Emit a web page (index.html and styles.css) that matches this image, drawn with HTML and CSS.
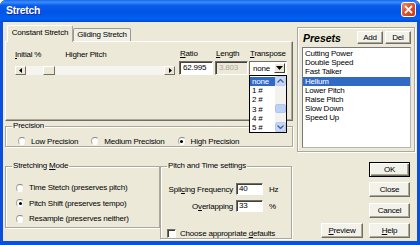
FILE: index.html
```html
<!DOCTYPE html>
<html lang="en">
<head>
    <meta charset="UTF-8">
    <title>Stretch</title>
    <link rel="stylesheet" href="styles.css">
</head>
<body>
    <div class="window">
        <div class="titlebar">
            <span class="title">Stretch</span>
            <span class="close">
                <svg width="9" height="9" viewBox="0 0 9 9"><path d="M1 1 L8 8 M8 1 L1 8" stroke="#fff" stroke-width="1.8"/></svg>
            </span>
        </div>
        <div class="client">
            <div class="top-row">
                <div class="left-col">
                    <div class="tabs">
                        <div class="tab active">Constant Stretch</div>
                        <div class="tab">Gliding Stretch</div>
                    </div>
                    <div class="panel">
                        <div class="slider-block">
                            <div class="slider-labels">
                                <span><u>I</u>nitial %</span>
                                <span class="higher">Higher Pitch</span>
                            </div>
                            <div class="scrollbar">
                                <span class="sb-btn"><svg width="4" height="5" viewBox="0 0 4 5"><path d="M3 0 L0 2.5 L3 5 Z" fill="#000"/></svg></span>
                                <span class="sb-track"><span class="sb-thumb"></span></span>
                                <span class="sb-btn"><svg width="4" height="5" viewBox="0 0 4 5"><path d="M1 0 L4 2.5 L1 5 Z" fill="#000"/></svg></span>
                            </div>
                        </div>
                        <div class="field ratio">
                            <label><u>R</u>atio</label>
                            <div class="input">62.995</div>
                        </div>
                        <div class="field length">
                            <label><u>L</u>ength</label>
                            <div class="input disabled">3.803</div>
                        </div>
                        <div class="field transpose">
                            <label><u>T</u>ranspose</label>
                            <div class="combo">
                                <span class="combo-value">none</span>
                                <span class="combo-btn"><svg width="7" height="4" viewBox="0 0 7 4"><path d="M0 0 H7 L3.5 4 Z" fill="#000"/></svg></span>
                            </div>
                            <div class="droplist">
                                <ul class="drop-items">
                                    <li class="selected">none</li>
                                    <li>1 #</li>
                                    <li>2 #</li>
                                    <li>3 #</li>
                                    <li>4 #</li>
                                    <li>5 #</li>
                                </ul>
                                <div class="drop-scroll">
                                    <span class="xp-arrow"><svg width="7" height="4" viewBox="0 0 7 4"><path d="M0.5 3.5 L3.5 0.5 L6.5 3.5" stroke="#4d6185" stroke-width="1.3" fill="none"/></svg></span>
                                    <span class="xp-track"><span class="xp-thumb"></span></span>
                                    <span class="xp-arrow"><svg width="7" height="4" viewBox="0 0 7 4"><path d="M0.5 0.5 L3.5 3.5 L6.5 0.5" stroke="#4d6185" stroke-width="1.3" fill="none"/></svg></span>
                                </div>
                            </div>
                        </div>
                    </div>
                    <fieldset class="group precision">
                        <legend>Precision</legend>
                        <div class="radio-row">
                            <span class="option"><span class="radio"></span>Low Precision</span>
                            <span class="option"><span class="radio"></span>Medium Precision</span>
                            <span class="option"><span class="radio checked"></span>High Precision</span>
                        </div>
                    </fieldset>
                </div>
                <div class="presets">
                    <div class="presets-head">
                        <span class="presets-title">Presets</span>
                        <button class="btn small">Add</button>
                        <button class="btn small">Del</button>
                    </div>
                    <ul class="preset-list">
                        <li>Cutting Power</li>
                        <li>Double Speed</li>
                        <li>Fast Talker</li>
                        <li class="selected">Helium</li>
                        <li>Lower Pitch</li>
                        <li>Raise Pitch</li>
                        <li>Slow Down</li>
                        <li>Speed Up</li>
                    </ul>
                </div>
            </div>
            <div class="bottom-row">
                <fieldset class="group mode">
                    <legend>Stretching <u>M</u>ode</legend>
                    <div class="option-col">
                        <span class="option"><span class="radio"></span>Time Stetch (preserves pitch)</span>
                        <span class="option"><span class="radio checked"></span>Pitch Shift (preserves tempo)</span>
                        <span class="option"><span class="radio"></span>Resample (preserves neither)</span>
                    </div>
                </fieldset>
                <fieldset class="group pitch">
                    <legend>Pitch and Time settings</legend>
                    <div class="settings">
                        <span class="set-label">Spli<u>c</u>ing Frequency</span>
                        <div class="input">40</div>
                        <span>Hz</span>
                        <span class="set-label">O<u>v</u>erlapping</span>
                        <div class="input">33</div>
                        <span>%</span>
                    </div>
                    <div class="check-row"><span class="checkbox"></span><span>Choose appropriate <u>d</u>efaults</span></div>
                </fieldset>
                <div class="buttons">
                    <span></span>
                    <button class="btn default">OK</button>
                    <span></span>
                    <button class="btn">Close</button>
                    <span></span>
                    <button class="btn">Cancel</button>
                    <button class="btn"><u>P</u>review</button>
                    <button class="btn"><u>H</u>elp</button>
                </div>
            </div>
        </div>
    </div>
</body>
</html>
```

FILE: styles.css
```css
body {
    margin: 0;
    background: #ffffff;
    font-family: "Liberation Sans", Arial, sans-serif;
    font-size: 8px;
    letter-spacing: -0.2px;
    color: #000;
}
.window {
    width: 420px;
    height: 245px;
    display: flex;
    flex-direction: column;
    background: #0b50dc;
    border-radius: 6px 6px 0 0;
    overflow: hidden;
}
.titlebar {
    height: 22px;
    flex: none;
    display: flex;
    align-items: center;
    justify-content: space-between;
    padding: 0 4px 0 6px;
    background: linear-gradient(180deg, #1668f0 0%, #3d8dfb 10%, #0a5cec 25%, #0054e6 55%, #0060f2 85%, #0049d4 100%);
}
.title {
    color: #fff;
    font-weight: bold;
    font-size: 10.5px;
    letter-spacing: -0.3px;
    text-shadow: 1px 1px 0 #0b2a9a;
    margin-top: -3px;
}
.close {
    width: 15px;
    height: 15px;
    box-sizing: border-box;
    border: 1px solid #fff;
    border-radius: 3px;
    background: linear-gradient(135deg, #f08b6c 0%, #e0532f 45%, #c63b1d 100%);
    display: flex;
    align-items: center;
    justify-content: center;
    margin-top: -3px;
}
.client {
    flex: 1;
    margin: 0 3px 4px;
    background: #ece9d8;
    padding: 3px 2px 0;
    display: flex;
    flex-direction: column;
}
.top-row {
    display: flex;
    gap: 4px;
    height: 127px;
}
.left-col {
    width: 288px;
    display: flex;
    flex-direction: column;
}
.tabs {
    display: flex;
    height: 16px;
    padding-left: 2px;
    position: relative;
    z-index: 1;
}
.tab {
    box-sizing: border-box;
    border: 1px solid #919b9c;
    border-bottom: none;
    border-radius: 2px 2px 0 0;
    background: #f1efe4;
    text-align: center;
    line-height: 12px;
}
.tab.active {
    width: 66px;
    height: 17px;
    line-height: 14px;
    background: #ece9d8;
    border-color: #aca899;
    border-top: 1px solid #fff;
    border-left: 1px solid #fff;
}
.tab:not(.active) {
    width: 58px;
    height: 13px;
    margin-top: 3px;
}
.panel {
    height: 80px;
    box-sizing: border-box;
    border-top: 1px solid #fff;
    border-left: 1px solid #fff;
    border-right: 1px solid #716f64;
    border-bottom: 1px solid #716f64;
    box-shadow: inset -1px -1px 0 #aca899;
    padding: 6px 0 0 9px;
    display: flex;
    align-items: flex-start;
}
.slider-block {
    width: 160px;
}
.slider-labels {
    height: 12px;
    line-height: 14px;
}
.higher {
    margin-left: 22px;
}
.scrollbar {
    margin-top: 6px;
    height: 9px;
    display: flex;
}
.sb-btn {
    width: 11px;
    height: 9px;
    box-sizing: border-box;
    background: #ece9d8;
    border-top: 1px solid #fff;
    border-left: 1px solid #fff;
    border-right: 1px solid #716f64;
    border-bottom: 1px solid #716f64;
    display: flex;
    align-items: center;
    justify-content: center;
}
.sb-track {
    flex: 1;
    background: #f5f4ee;
    display: flex;
    padding-left: 17px;
}
.sb-thumb {
    width: 12px;
    height: 9px;
    box-sizing: border-box;
    background: #ece9d8;
    border-top: 1px solid #fff;
    border-left: 1px solid #fff;
    border-right: 1px solid #716f64;
    border-bottom: 1px solid #716f64;
}
.field {
    display: flex;
    flex-direction: column;
}
.field label {
    height: 12px;
    line-height: 11px;
    padding-left: 1px;
}
.ratio { width: 34px; margin-left: 4px; }
.length { width: 33px; margin-left: 2px; }
.transpose { width: 38px; margin-left: 1px; position: relative; }
.input {
    margin-top: 1px;
    height: 14px;
    box-sizing: border-box;
    background: #fff;
    border-top: 1px solid #716f64;
    border-left: 1px solid #716f64;
    border-right: 1px solid #fff;
    border-bottom: 1px solid #fff;
    box-shadow: inset 1px 1px 0 #404040;
    padding-left: 3px;
    line-height: 12px;
}
.input.disabled {
    background: #ece9d8;
    color: #aca899;
}
.combo {
    margin-top: 1px;
    height: 14px;
    box-sizing: border-box;
    background: #fff;
    border-top: 1px solid #716f64;
    border-left: 1px solid #716f64;
    border-right: 1px solid #fff;
    border-bottom: 1px solid #fff;
    display: flex;
    align-items: center;
    justify-content: space-between;
    padding: 1px 1px 1px 3px;
}
.combo-btn {
    width: 11px;
    height: 10px;
    box-sizing: border-box;
    background: #ece9d8;
    border-top: 1px solid #fff;
    border-left: 1px solid #fff;
    border-right: 1px solid #404040;
    border-bottom: 1px solid #404040;
    display: flex;
    align-items: center;
    justify-content: center;
}
.droplist {
    position: absolute;
    top: 27px;
    left: 0;
    width: 38px;
    height: 58px;
    box-sizing: border-box;
    border: 1px solid #000;
    background: #fff;
    display: flex;
    z-index: 5;
}
.drop-items {
    flex: 1;
    list-style: none;
    margin: 0;
    padding: 1px 0 0;
}
.drop-items li {
    height: 9.2px;
    line-height: 9.2px;
    padding-left: 2px;
}
.drop-items li.selected,
.preset-list li.selected {
    background: #316ac5;
    color: #fff;
}
.drop-scroll {
    width: 11px;
    display: flex;
    flex-direction: column;
    background: #f3f2ec;
}
.xp-arrow {
    height: 10px;
    box-sizing: border-box;
    border: 1px solid #b7cbf4;
    border-radius: 2px;
    background: #c6d6fa;
    display: flex;
    align-items: center;
    justify-content: center;
}
.xp-track {
    flex: 1;
    padding-top: 18px;
}
.xp-thumb {
    display: block;
    height: 7px;
    border-radius: 2px;
    background: #bcd0f8;
    border: 1px solid #b0c6f2;
}
fieldset.group {
    margin: 0;
    padding: 0;
    min-width: 0;
    box-sizing: border-box;
    border: 1px solid #aca899;
    box-shadow: inset 1px 1px 0 #fff, 1px 1px 0 #fff;
}
fieldset.group legend {
    padding: 0 1px;
    margin-left: 6px;
    line-height: 10px;
}
.precision {
    margin-top: 4px;
    padding-bottom: 4px;
}
.radio-row {
    display: flex;
    gap: 13px;
    height: 10px;
    align-items: center;
    margin: 5px 0 0 12px;
}
.option {
    display: flex;
    align-items: center;
    gap: 5px;
}
.radio {
    width: 8px;
    height: 8px;
    box-sizing: border-box;
    border-radius: 50%;
    background: #fff;
    border: 1px solid;
    border-color: #8a8778 #e6e4da #fff #a9a79a;
    display: flex;
    align-items: center;
    justify-content: center;
}
.radio.checked::after {
    content: "";
    width: 3px;
    height: 3px;
    border-radius: 50%;
    background: #000;
}
.presets {
    width: 118px;
    height: 125px;
    margin-top: 2px;
    box-sizing: border-box;
    border: 1px solid #aca899;
    box-shadow: inset 1px 1px 0 #fff, 1px 1px 0 #fff;
    padding: 3px 3px 0 4px;
}
.presets-head {
    display: flex;
    align-items: center;
    height: 13px;
}
.presets-title {
    font-weight: bold;
    font-style: italic;
    font-size: 10.5px;
    letter-spacing: 0;
    flex: 1;
    padding-left: 1px;
}
.btn {
    font-family: inherit;
    font-size: 8px;
    letter-spacing: -0.2px;
    color: #000;
    padding: 0;
    background: #f2f1ea;
    border-top: 1px solid #fff;
    border-left: 1px solid #fff;
    border-right: 1px solid #716f64;
    border-bottom: 1px solid #716f64;
    box-shadow: inset -1px -1px 0 #aca899;
    border-radius: 0;
}
.btn.small {
    width: 26px;
    height: 13px;
    margin-left: 2px;
}
.preset-list {
    list-style: none;
    margin: 3px 0 0;
    padding: 1px 0 0;
    height: 101px;
    box-sizing: border-box;
    background: #fff;
    border: 1px solid #7a7a7a;
    border-right-color: #b5b5b5;
    border-bottom-color: #b5b5b5;
}
.preset-list li {
    height: 9.2px;
    line-height: 9.2px;
    padding-left: 2px;
}
.bottom-row {
    display: flex;
    align-items: flex-start;
    padding-top: 9px;
}
.mode {
    flex: none;
    width: 155px;
    margin-left: 1px;
    padding-bottom: 13px;
}
.option-col {
    display: flex;
    flex-direction: column;
    margin: 9px 0 0 10px;
}
.option-col .option {
    height: 15.5px;
}
.pitch {
    flex: none;
    width: 132px;
    margin-left: 5px;
    padding-bottom: 3px;
}
.settings {
    display: grid;
    grid-template-columns: 66px 27px auto;
    grid-auto-rows: 12px;
    column-gap: 3px;
    row-gap: 5px;
    align-items: center;
    margin: 12px 0 0 6px;
}
.settings .set-label {
    text-align: right;
}
.settings .input {
    margin-top: 0;
    height: 12px;
    line-height: 10px;
    padding-left: 2px;
}
.settings > span:not(.set-label) {
    padding-left: 3px;
}
.check-row {
    display: flex;
    align-items: center;
    gap: 4px;
    height: 10px;
    margin: 16px 0 0 6px;
}
.checkbox {
    width: 9px;
    height: 9px;
    box-sizing: border-box;
    background: #fff;
    border: 1px solid;
    border-color: #716f64 #fff #fff #716f64;
    box-shadow: inset 1px 1px 0 #404040;
}
.buttons {
    margin-left: auto;
    margin-right: 5px;
    margin-top: 1px;
    display: grid;
    grid-template-columns: 42px 41px;
    grid-auto-rows: 15px;
    column-gap: 6px;
    row-gap: 5.3px;
}
.btn.default {
    border: 1px solid #000;
    box-shadow: inset 1px 1px 0 #fff, inset -1px -1px 0 #716f64, inset -2px -2px 0 #aca899;
}
```
